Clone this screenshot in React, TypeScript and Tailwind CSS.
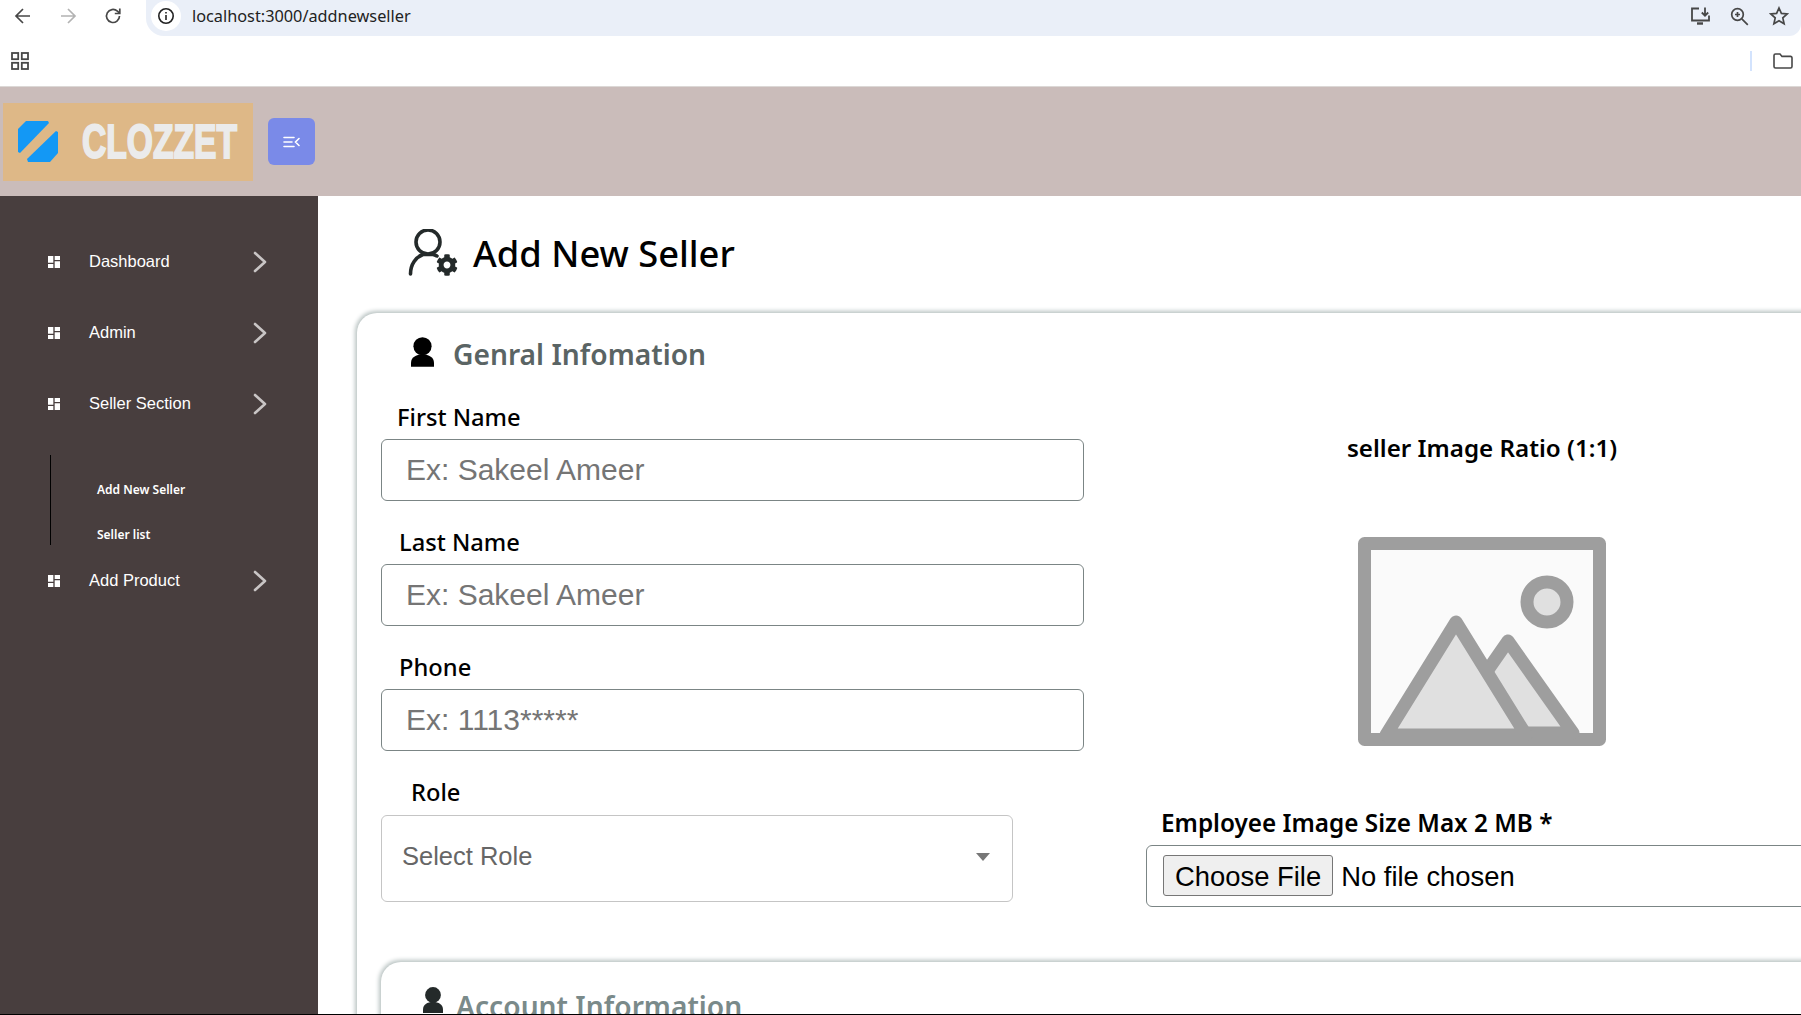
import React from "react";
import { FaCog } from "react-icons/fa";

const sans = "font-['Noto_Sans',sans-serif]";
const arial = "font-['Liberation_Sans',Arial,sans-serif]";

function DashIcon() {
  return (
    <svg width="12" height="12" viewBox="3 3 18 18" className="shrink-0" fill="#fff">
      <path d="M3 13h8V3H3v10zm0 8h8v-6H3v6zm10 0h8V11h-8v10zm0-18v6h8V3h-8z" />
    </svg>
  );
}

function Chevron() {
  return (
    <svg width="14" height="22" viewBox="0 0 14 22" fill="none" stroke="#c9c5c5" strokeWidth="2.6" strokeLinecap="round" strokeLinejoin="round">
      <path d="M2 2l10 9-10 9" />
    </svg>
  );
}

function NavItem({ label }: { label: string }) {
  return (
    <div className="flex h-[71px] items-center pl-[48px] pr-[51px]">
      <DashIcon />
      <span className={`ml-[29px] flex-1 text-[16.5px] text-white ${arial}`}>{label}</span>
      <Chevron />
    </div>
  );
}

function Person({ w = 24, h = 31, fill = "#000", className = "" }: { w?: number; h?: number; fill?: string; className?: string }) {
  return (
    <svg width={w} height={h} viewBox="0 0 24 31" fill={fill} className={`shrink-0 ${className}`}>
      <circle cx="12" cy="9.5" r="9.5" />
      <path d="M0 31v-4C0 21 5 18 12 18s12 3 12 9v4z" />
    </svg>
  );
}

function Field({ label, placeholder, labelPad }: { label: string; placeholder: string; labelPad: string }) {
  return (
    <div className="mb-[21px]">
      <label className={`block h-[42px] text-[23.7px] leading-[40px] font-medium text-black ${labelPad} ${sans}`}>{label}</label>
      <input
        placeholder={placeholder}
        className={`block h-[62px] w-[703px] rounded-md border border-[#7b8585] bg-white px-[24px] text-[30px] outline-none placeholder:text-[#757575] ${arial}`}
      />
    </div>
  );
}

export default function App() {
  return (
    <div className="flex h-[1015px] w-[1801px] flex-col overflow-hidden border-b border-black bg-white">
      {/* browser toolbar */}
      <div className="flex h-[36px] shrink-0 items-center">
        <div className="flex w-[146px] items-center pb-[4px] pl-[14px] text-[#474747]">
          <svg width="18" height="18" viewBox="0 0 18 18" fill="none" stroke="#474747" strokeWidth="1.7"><path d="M16 9H2.5M9 2L2 9l7 7" /></svg>
          <svg className="ml-[27px]" width="18" height="18" viewBox="0 0 18 18" fill="none" stroke="#b3b3b3" strokeWidth="1.7"><path d="M2 9h13.5M9 2l7 7-7 7" /></svg>
          <svg className="ml-[27px]" width="18" height="18" viewBox="0 0 18 18" fill="none" stroke="#474747" strokeWidth="1.7"><path d="M15.5 9A6.5 6.5 0 1 1 13.4 4.2L15.5 6.2" /><path d="M15.8 1.5v5h-5" /></svg>
        </div>
        <div className="flex h-[36px] flex-1 items-center rounded-bl-[18px] rounded-br-[12px] bg-[#eaeff8] pb-[4px] pl-[5px] pr-[12px]">
          <div className="flex h-[30px] w-[30px] items-center justify-center rounded-full bg-white">
            <svg width="18" height="18" viewBox="0 0 18 18" fill="none" stroke="#222" strokeWidth="1.6"><circle cx="9" cy="9" r="7.2" /><path d="M9 8v5M9 5v1.6" /></svg>
          </div>
          <span className={`ml-[11px] flex-1 text-[16.3px] text-[#222] ${sans}`}>localhost:3000/addnewseller</span>
          <svg className="mr-[1px]" width="20" height="20" viewBox="0 0 20 20" fill="none" stroke="#474747" strokeWidth="1.8"><path d="M9 2.5H2v12h17v-5" /><path d="M7 17.5h6" strokeWidth="2.4" /><path d="M15 1.5v8M11.8 6.5l3.2 3.2 3.2-3.2" /></svg>
          <svg className="ml-[19px]" width="19" height="19" viewBox="0 0 19 19" fill="none" stroke="#474747" strokeWidth="1.7"><circle cx="7.5" cy="7.5" r="5.8" /><path d="M11.8 11.8l6 6M5 7.5h5M7.5 5v5" /></svg>
          <svg className="ml-[20px]" width="20" height="20" viewBox="0 0 20 20" fill="none" stroke="#474747" strokeWidth="1.7"><path d="M10 2l2.4 5.4 5.8.6-4.4 3.9 1.3 5.8L10 14.7l-5.1 3 1.3-5.8L1.8 8l5.8-.6z" /></svg>
        </div>
      </div>
      {/* bookmarks bar */}
      <div className="flex h-[50px] shrink-0 items-center pl-[11px] pr-[8px]">
        <svg width="18" height="18" viewBox="0 0 18 18" fill="none" stroke="#474747" strokeWidth="1.8"><rect x="1" y="1" width="6.2" height="6.2" /><rect x="10.8" y="1" width="6.2" height="6.2" /><rect x="1" y="10.8" width="6.2" height="6.2" /><rect x="10.8" y="10.8" width="6.2" height="6.2" /></svg>
        <div className="ml-auto mr-[21px] h-[20px] w-[2px] bg-[#d3e3fd]" />
        <svg width="20" height="16" viewBox="0 0 20 16" fill="none" stroke="#474747" strokeWidth="1.6"><path d="M1 2.5a1.5 1.5 0 0 1 1.5-1.5H7l2 2.4h8.5A1.5 1.5 0 0 1 19 5v8.5a1.5 1.5 0 0 1-1.5 1.5h-15A1.5 1.5 0 0 1 1 13.5z" /></svg>
      </div>
      {/* app header */}
      <header className="flex h-[110px] shrink-0 items-center border-t border-[#dcd8d6] bg-[#cabcba] pl-[3px]">
        <div className="flex h-[78px] w-[250px] items-center overflow-hidden bg-[#deb887] pl-[15px]">
          <svg width="41" height="41" viewBox="0 0 41 41" fill="#1398f5" className="shrink-0">
            <path d="M8 0h22l1 2L2 32l-2-1V8z" />
            <path d="M40 11v21l-8 9H10l-1-3L38 10z" />
          </svg>
          <span className={`ml-[23px] inline-block w-[157px] origin-left scale-x-[0.7] whitespace-nowrap text-[48px] leading-none font-black text-[#ebebeb] [-webkit-text-stroke:2px_#ebebeb] ${arial}`}>CLOZZET</span>
        </div>
        <button className="ml-[15px] flex h-[47px] w-[47px] items-center justify-center rounded-md bg-[#7a8ae8]">
          <svg width="17" height="12" viewBox="0 0 17 12" fill="none" stroke="#fff" strokeWidth="1.6" strokeLinecap="round"><path d="M1 1.5h10M1 6h8M1 10.5h10M16 2.5L12.5 6l3.5 3.5" /></svg>
        </button>
      </header>
      <div className="flex min-h-0 flex-1">
        {/* sidebar */}
        <aside className="w-[318px] shrink-0 bg-[#483e3e] pt-[30px]">
          <NavItem label="Dashboard" />
          <NavItem label="Admin" />
          <NavItem label="Seller Section" />
          <div className="ml-[50px] mt-[16px] flex h-[90px] flex-col gap-[27px] border-l border-black pl-[46px] pt-[26px]">
            <span className={`text-xs leading-[18px] font-semibold text-white ${sans}`}>Add New Seller</span>
            <span className={`text-xs leading-[18px] font-semibold text-white ${sans}`}>Seller list</span>
          </div>
          <NavItem label="Add Product" />
        </aside>
        {/* main */}
        <main className="min-w-0 flex-1 overflow-hidden">
          <div className="flex h-[117px] items-center pb-[2px] pl-[90px]">
            <svg width="52" height="50" viewBox="0 0 52 50" fill="none" stroke="#242a2a" strokeWidth="3.6" strokeLinecap="round">
              <circle cx="20" cy="13" r="12" />
              <path d="M2.5 45C2.5 35 8 28 15 25.5h10c2 .4 3 1 4 1.5" />
              <FaCog x="28" y="25" size="22" fill="#242a2a" stroke="none" />
            </svg>
            <h1 className={`ml-[13px] text-[36.3px] leading-none font-medium text-black ${sans}`}>Add New Seller</h1>
          </div>
          <section className="ml-[39px] min-h-[900px] w-[1500px] rounded-tl-[20px] bg-white pl-[24px] pt-[20px] shadow-[-1px_-1px_4px_1px_#b9c3c2]">
            <div className="flex h-[44px] items-center pb-[2px] pl-[30px]">
              <Person w={23} h={30} className="mt-[4px] self-start" />
              <h2 className={`ml-[19px] text-[28.2px] font-semibold leading-none text-[#5a6464] ${sans}`}>Genral Infomation</h2>
            </div>
            <div className="flex">
              <div className="w-[765px] shrink-0 pt-[20px]">
                <Field label="First Name" placeholder="Ex: Sakeel Ameer" labelPad="pl-[16px]" />
                <Field label="Last Name" placeholder="Ex: Sakeel Ameer" labelPad="pl-[18px]" />
                <Field label="Phone" placeholder="Ex: 1113*****" labelPad="pl-[18px]" />
                <label className={`block h-[43px] pl-[30px] text-[23.7px] leading-[40px] font-medium text-black ${sans}`}>Role</label>
                <div className={`flex h-[87px] w-[632px] items-start justify-between rounded-md border border-[#c5c5c5] bg-white pl-[20px] pr-[22px] pt-[22px] text-[25.5px] leading-[36px] text-[#666] ${arial}`}>
                  <span>Select Role</span>
                  <span className="mt-[15px] h-0 w-0 border-x-[7px] border-t-[8px] border-x-transparent border-t-[#777]" />
                </div>
              </div>
              <div className="w-[672px] shrink-0">
                <p className={`mt-[53px] text-center text-[24.2px] leading-[36px] font-semibold text-black ${sans}`}>seller Image Ratio (1:1)</p>
                <div className="mt-[71px] flex justify-center">
                  <svg width="248" height="209" viewBox="0 0 248 209" className="block">
                    <rect x="6.5" y="6.5" width="235" height="196" fill="#fafafa" stroke="#9e9e9e" strokeWidth="13" strokeLinejoin="round" />
                    <circle cx="189" cy="65" r="20" fill="#e0e0e0" stroke="#9e9e9e" strokeWidth="13" />
                    <path d="M118 150L150 104l65 92H160z" fill="#e0e0e0" stroke="#9e9e9e" strokeWidth="13" strokeLinejoin="round" />
                    <path d="M28 198L98 85l70 113z" fill="#e0e0e0" stroke="#9e9e9e" strokeWidth="13" strokeLinejoin="round" />
                  </svg>
                </div>
                <label className={`mt-[59px] block h-[40px] pl-[15px] text-[24.3px] leading-[36px] font-semibold text-black ${sans}`}>Employee Image Size Max 2 MB *</label>
                <div className="h-[62px] w-[800px] rounded-md border border-[#7b8585] bg-white pl-[16px] pt-[9px]">
                  <input type="file" className={`block w-[600px] text-[27.4px] leading-[41px] text-black file:mr-[8px] file:h-[41px] file:rounded-[3px] file:border file:border-solid file:border-[#767676] file:bg-[#efefef] file:px-[11px] ${arial}`} />
                </div>
              </div>
            </div>
            <div className="mt-[55px] min-h-[200px] rounded-tl-[20px] bg-white pl-[42px] pt-[25px] shadow-[-1px_-1px_4px_1px_#b9c3c2]">
              <div className="flex items-start">
                <Person w={20} h={26} fill="#242a2a" />
                <h2 className={`ml-[13px] mt-[5px] text-[28.2px] font-semibold leading-[28px] text-[#7a8a8a] ${sans}`}>Account Information</h2>
              </div>
            </div>
          </section>
        </main>
      </div>
    </div>
  );
}
